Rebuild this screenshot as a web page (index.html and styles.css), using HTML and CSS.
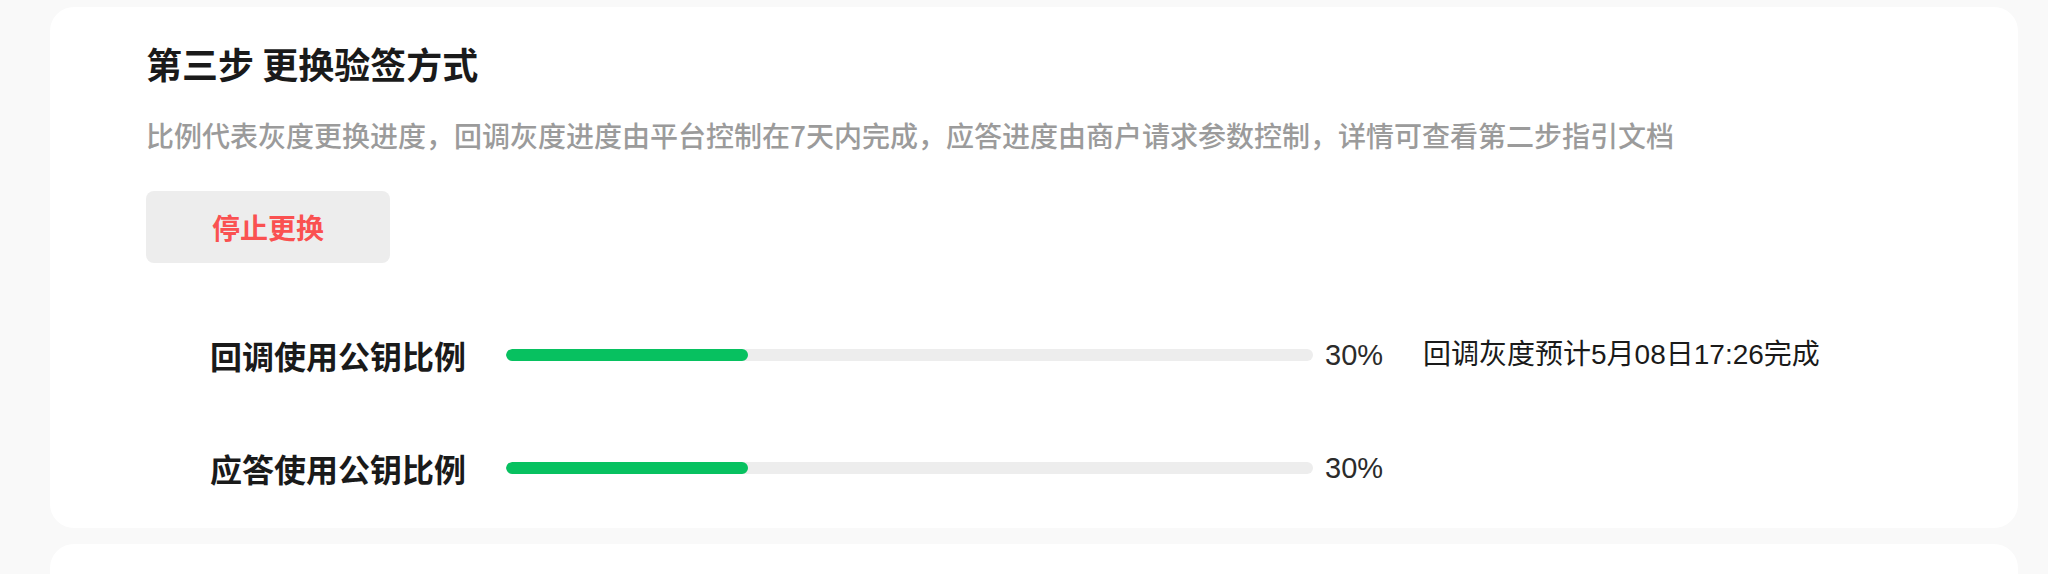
FILE: index.html
```html
<!DOCTYPE html>
<html lang="zh-CN">
<head>
<meta charset="utf-8">
<title>第三步 更换验签方式</title>
<link rel="stylesheet" href="styles.css">
</head>
<body>
<div class="page">
  <section class="card">
    <h2 class="title">第三步 更换验签方式</h2>
    <p class="desc">比例代表灰度更换进度，回调灰度进度由平台控制在7天内完成，应答进度由商户请求参数控制，详情可查看第二步指引文档</p>
    <button class="btn-stop" type="button">停止更换</button>
    <div class="rows">
      <div class="row">
        <span class="label">回调使用公钥比例</span>
        <div class="track"><div class="fill" style="width:30%"></div></div>
        <span class="pct">30%</span>
        <span class="note">回调灰度预计5月08日17:26完成</span>
      </div>
      <div class="row">
        <span class="label">应答使用公钥比例</span>
        <div class="track"><div class="fill" style="width:30%"></div></div>
        <span class="pct">30%</span>
      </div>
    </div>
  </section>
  <section class="card card-next"></section>
</div>
</body>
</html>
```

FILE: styles.css
```css
* { box-sizing: border-box; }
html, body {
  margin: 0;
  padding: 0;
  background: #f9f9f9;
  font-family: "Liberation Sans", "Noto Sans CJK SC", sans-serif;
  color: #1a1a1a;
}
.page {
  display: flex;
  flex-direction: column;
  gap: 16px;
  padding: 7px 30px 0 50px;
  height: 574px;
  overflow: hidden;
}
.card {
  background: #ffffff;
  border-radius: 24px;
  padding: 32px 96px 32px 96px;
  flex: none;
}
.card-next {
  height: 200px;
}
.title {
  margin: 0;
  font-family: "Noto Sans CJK SC", sans-serif;
  font-size: 36px;
  line-height: 48px;
  font-weight: 700;
  color: #1a1a1a;
}
.desc {
  margin: 28px 0 0 0;
  font-family: "Noto Sans CJK SC", sans-serif;
  font-size: 28px;
  line-height: 40px;
  font-weight: 500;
  color: #9b9b9b;
}
.btn-stop {
  display: block;
  margin-top: 36px;
  width: 244px;
  height: 72px;
  border: none;
  border-radius: 8px;
  background: #ededed;
  color: #fa5151;
  font-family: "Noto Sans CJK SC", sans-serif;
  font-size: 28px;
  font-weight: 600;
  padding: 0;
}
.rows {
  margin-top: 64px;
  padding-left: 64px;
  display: flex;
  flex-direction: column;
  gap: 57px;
}
.row {
  display: flex;
  align-items: center;
  height: 56px;
}
.label {
  width: 256px;
  font-family: "Noto Sans CJK SC", sans-serif;
  font-size: 32px;
  font-weight: 700;
  line-height: 56px;
  color: #1a1a1a;
  white-space: nowrap;
}
.track {
  margin-left: 40px;
  width: 807px;
  height: 12px;
  border-radius: 6px;
  background: #ededed;
  overflow: hidden;
}
.fill {
  height: 100%;
  border-radius: 6px;
  background: #07c160;
}
.pct {
  margin-left: 12px;
  font-size: 29px;
  line-height: 40px;
  color: #2b2b2b;
}
.note {
  margin-left: 40px;
  font-size: 28px;
  line-height: 40px;
  color: #1a1a1a;
  white-space: nowrap;
}
```
